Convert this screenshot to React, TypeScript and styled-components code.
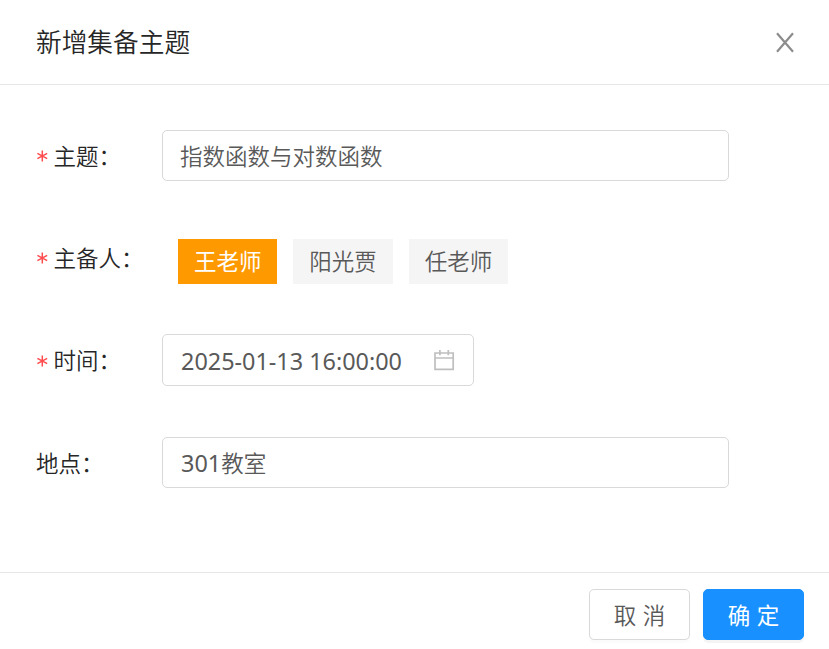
import React from 'react';
import styled, { createGlobalStyle } from 'styled-components';

const Global = createGlobalStyle`
  *, *::before, *::after { box-sizing: border-box; }
  body { margin: 0; background: #fff; font-family: "Noto Sans", "Noto Sans CJK SC", sans-serif; font-weight: 350; }
`;
const Dialog = styled.div`
  width: 829px; height: 649px; display: flex; flex-direction: column; background: #fff;
`;
const Header = styled.header`
  height: 85px; flex: none; display: flex; align-items: center; justify-content: space-between;
  padding: 0 33px 0 36px; border-bottom: 1px solid #e6e6e6;
`;
const Title = styled.h1`
  margin: 0; padding-top: 2px; font-size: 25.7px; font-weight: 350; line-height: 36px; color: #262626; white-space: nowrap;
`;
const CloseButton = styled.button`
  border: 0; padding: 0; background: none; width: 22px; height: 22px; display: flex;
`;
const Body = styled.main`
  flex: 1; padding: 45px 36px 0; display: flex; flex-direction: column; gap: 51px;
`;
const Row = styled.div<{ $height?: number }>`
  display: flex; align-items: center; height: ${p => p.$height ?? 51}px;
`;
const Label = styled.label`
  width: 126px; flex: none; display: flex; align-items: center; font-size: 22.5px; line-height: 34px;
  padding-top: 2px; color: #262626; white-space: nowrap;
`;
const Star = styled.svg`
  width: 12px; height: 12px; margin: -1px 5.5px 0 0; flex: none;
`;
const Field = styled.div<{ $width: number }>`
  width: ${p => p.$width}px; height: 100%; border: 1px solid #d9d9d9; border-radius: 5px;
  padding: 0 18px 0 17px; display: flex; align-items: center; justify-content: space-between;
  font-size: 22.5px; line-height: 34px; color: #595959; white-space: nowrap;
`;
const Value = styled.span`
  padding-top: 2px;
`;
const Digits = styled.span`
  margin-left: 1px; font-size: 23.4px; font-weight: 400;
`;
const Tags = styled.div`
  display: flex; gap: 16px; padding: 7px 0 0 16px;
`;
const Tag = styled.button<{ $active?: boolean }>`
  border: 0; padding: 0; width: 99.4px; height: 45px; font: inherit; font-size: 22.5px; line-height: 45px;
  font-weight: ${p => (p.$active ? 400 : 350)};
  color: ${p => (p.$active ? '#fff' : '#595959')}; background: ${p => (p.$active ? '#ff9900' : '#f5f5f5')};
`;
const Footer = styled.footer`
  height: 77px; flex: none; display: flex; justify-content: flex-end; gap: 13px; padding: 16px 25px 0;
  border-top: 1px solid #e6e6e6;
`;
const Button = styled.button<{ $primary?: boolean }>`
  width: 101px; height: 51px; padding: 2px 0 0; border-radius: 5px; font: inherit; font-size: 22.5px; line-height: 47px;
  font-weight: ${p => (p.$primary ? 400 : 350)}; word-spacing: 0.5px;
  border: 1px solid ${p => (p.$primary ? '#1890ff' : '#d9d9d9')};
  color: ${p => (p.$primary ? '#fff' : '#595959')}; background: ${p => (p.$primary ? '#1890ff' : '#fff')};
  box-shadow: 0 3px 0 rgba(0, 0, 0, ${p => (p.$primary ? 0.045 : 0.015)});
`;

const Required = () => (
  <Star viewBox="0 0 12 12" fill="none" stroke="#ff4d4f" strokeWidth="1.5">
    <path d="M6.3 .5v11M1.4 3.3l9.8 5.4M11.2 3.3 1.4 8.7" />
  </Star>
);
const CalendarIcon = () => (
  <svg width="22" height="22" viewBox="0 0 22 22" fill="none" stroke="#bfbfbf" strokeWidth="1.7">
    <path d="M2 4h18.2v16.4H2zM2 9h18.2M6.9 1v5.2M15.3 1v5.2" />
  </svg>
);

export default function App() {
  return (
    <>
      <Global />
      <Dialog role="dialog">
        <Header>
          <Title>新增集备主题</Title>
          <CloseButton aria-label="关闭">
            <svg width="22" height="22" viewBox="0 0 22 22" fill="none" stroke="#8c8c8c" strokeWidth="2.2">
              <path d="M3 2.2l16 18.6M19 2.2l-16 18.6" />
            </svg>
          </CloseButton>
        </Header>
        <Body>
          <Row><Label><Required />主题：</Label><Field $width={567}><Value>指数函数与对数函数</Value></Field></Row>
          <Row><Label><Required />主备人：</Label><Tags><Tag $active>王老师</Tag><Tag>阳光贾</Tag><Tag>任老师</Tag></Tags></Row>
          <Row $height={52}><Label><Required />时间：</Label><Field $width={312}><Value><Digits>2025-01-13 16:00:00</Digits></Value><CalendarIcon /></Field></Row>
          <Row><Label>地点：</Label><Field $width={567}><Value><Digits>301</Digits>教室</Value></Field></Row>
        </Body>
        <Footer><Button>取 消</Button><Button $primary>确 定</Button></Footer>
      </Dialog>
    </>
  );
}
